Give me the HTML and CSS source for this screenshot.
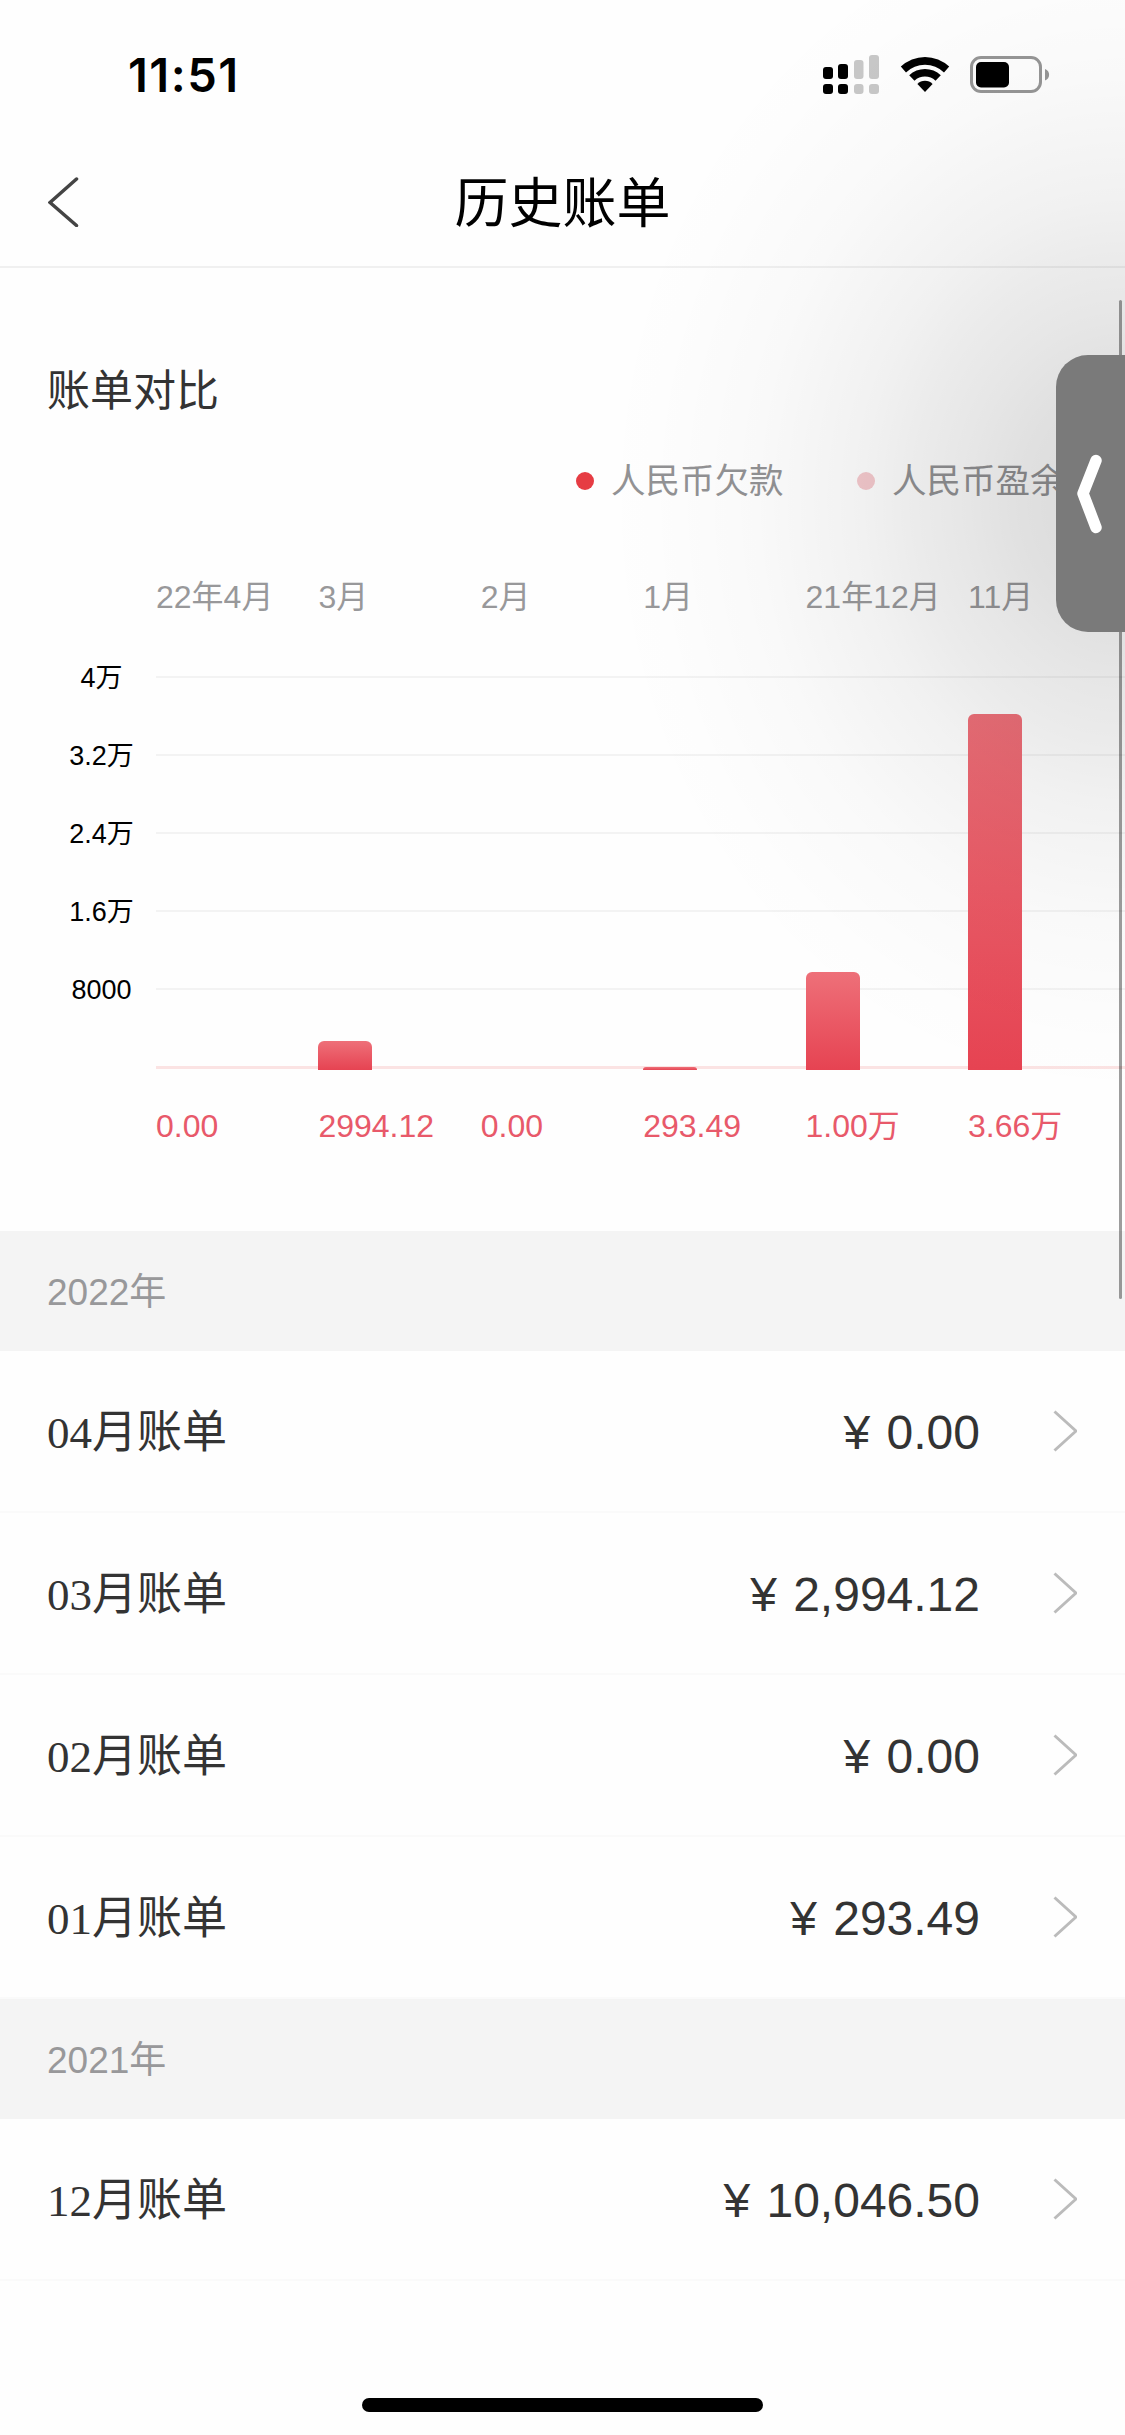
FILE: index.html
```html
<!DOCTYPE html>
<html lang="zh-CN">
<head>
  <meta charset="UTF-8" />
  <meta name="viewport" content="width=device-width, initial-scale=1.0"/>
  <title>历史账单</title>
  <link rel="stylesheet" href="styles.css">
</head>
<body>

<div class="status-bar">
  <span class="time">11:51</span>
  <div class="status-icons">
    <svg class="signal" width="56" height="40" viewBox="0 0 56 40">
      <rect x="0" y="12" width="10" height="12" rx="3"/>
      <rect x="15" y="9" width="10" height="15" rx="3"/>
      <rect class="off" x="31" y="5" width="9.500" height="19" rx="3"/>
      <rect class="off" x="46" y="0" width="10" height="24" rx="3"/>
      <rect x="0" y="29" width="10" height="10" rx="3"/>
      <rect x="15" y="29" width="10" height="10" rx="3"/>
      <rect class="off" x="31" y="29" width="9.500" height="10" rx="3"/>
      <rect class="off" x="46" y="29" width="10" height="10" rx="3"/>
    </svg>
    <svg class="wifi" width="50" height="38" viewBox="0 0 50 38">
      <path d="M.8 10.600a35 35 0 0 1 48.400 0l-5.200 5.800a27.500 27.500 0 0 0-38 0z"/>
      <path d="M9.200 19.200a23 23 0 0 1 31.600 0l-5.300 5.600a15.200 15.200 0 0 0-21 0z"/>
      <path d="M17.400 28a10.500 10.500 0 0 1 15.200 0L25 36z"/>
    </svg>
    <svg class="battery" width="80" height="38" viewBox="0 0 80 38">
      <rect class="case" x="1.500" y="1.500" width="69" height="34" rx="9.500"/>
      <rect x="6" y="6" width="33" height="25.500" rx="5"/>
      <path class="nub" d="M75 13c5.500 2 5.500 9.500 0 11.500z"/>
    </svg>
  </div>
</div>

<header class="nav">
  <svg class="back" width="32" height="50" viewBox="0 0 32 50">
    <path d="M28.500 2 2 25.500 28.500 48.500"/>
  </svg>
  <h1>历史账单</h1>
</header>

<section class="compare">
  <h2>账单对比</h2>

  <div class="legend">
    <span class="legend-item"><i class="dot"></i>人民币欠款</span>
    <span class="legend-item"><i class="dot dot-light"></i>人民币盈余</span>
  </div>

  <div class="chart">
    <div class="months">
      <span>22年4月</span>
      <span>3月</span>
      <span>2月</span>
      <span>1月</span>
      <span>21年12月</span>
      <span>11月</span>
    </div>

    <div class="axis">
      <span>4万</span>
      <span>3.2万</span>
      <span>2.4万</span>
      <span>1.6万</span>
      <span>8000</span>
    </div>

    <div class="lines">
      <i></i><i></i><i></i><i></i><i></i>
    </div>

    <div class="bars">
      <span class="bar" style="height: 0"></span>
      <span class="bar" style="height: 29px"></span>
      <span class="bar" style="height: 0"></span>
      <span class="bar" style="height: 3px"></span>
      <span class="bar" style="height: 98px"></span>
      <span class="bar" style="height: 356px"></span>
    </div>

    <div class="values">
      <span>0.00</span>
      <span>2994.12</span>
      <span>0.00</span>
      <span>293.49</span>
      <span>1.00万</span>
      <span>3.66万</span>
    </div>
  </div>
</section>

<h3 class="year">2022年</h3>
<ul class="bills">
  <li>
    <span class="month">04月账单</span>
    <span class="amount">¥ 0.00</span>
    <svg class="arrow" width="25" height="42" viewBox="0 0 25 42"><path d="M2.500 1.500 24 21 2.500 40.500"/></svg>
  </li>
  <li>
    <span class="month">03月账单</span>
    <span class="amount">¥ 2,994.12</span>
    <svg class="arrow" width="25" height="42" viewBox="0 0 25 42"><path d="M2.500 1.500 24 21 2.500 40.500"/></svg>
  </li>
  <li>
    <span class="month">02月账单</span>
    <span class="amount">¥ 0.00</span>
    <svg class="arrow" width="25" height="42" viewBox="0 0 25 42"><path d="M2.500 1.500 24 21 2.500 40.500"/></svg>
  </li>
  <li>
    <span class="month">01月账单</span>
    <span class="amount">¥ 293.49</span>
    <svg class="arrow" width="25" height="42" viewBox="0 0 25 42"><path d="M2.500 1.500 24 21 2.500 40.500"/></svg>
  </li>
</ul>

<h3 class="year">2021年</h3>
<ul class="bills">
  <li>
    <span class="month">12月账单</span>
    <span class="amount">¥ 10,046.50</span>
    <svg class="arrow" width="25" height="42" viewBox="0 0 25 42"><path d="M2.500 1.500 24 21 2.500 40.500"/></svg>
  </li>
</ul>

<div class="home-indicator"></div>

<!-- 阴影、滚动条和侧边按钮浮在页面上方 -->
<div class="shade"></div>
<div class="scrollbar"></div>
<div class="side-tab">
  <svg width="26" height="80" viewBox="0 0 26 80"><path d="M19 6.500 6 39.500 19 73.500"/></svg>
</div>

</body>
</html>
```
FILE: styles.css
```css
* {
  box-sizing: border-box;
}
body {
  position: relative;
  margin: 0;
  width: 1125px;
  height: 2435px;
  overflow: hidden;
  display: flex;
  flex-direction: column;
  background-color: #fefefe;
  font-family: "Liberation Sans", "Noto Sans CJK SC", sans-serif;
  color: #333;
}
h1, h2, h3, ul {
  margin: 0;
  padding: 0;
  font-weight: 400;
}
svg {
  display: block;
  flex: none;
}

/* status bar */
.status-bar {
  height: 134px;
  padding: 55px 76px 0 128px;
  display: flex;
  justify-content: space-between;
  align-items: flex-start;
  color: #000;
}
.time {
  font-family: Inter, sans-serif;
  font-weight: 600;
  font-size: 47px;
  line-height: 40px;
  letter-spacing: 1.500px;
}
.status-icons {
  display: flex;
  align-items: flex-start;
}
.signal .off {
  fill: #c8c8c8;
}
.wifi {
  margin: 1px 20px 0 21px;
}
.battery {
  margin-top: 1px;
  margin-right: -1px;
}
.battery .case {
  fill: none;
  stroke: #969696;
  stroke-width: 3;
}
.battery .nub {
  fill: #969696;
}

/* nav */
.nav {
  height: 134px;
  padding: 4px 48px 0;
  display: grid;
  grid-template-columns: 32px 1fr 32px;
  align-items: center;
  border-bottom: 2px solid #f0f0f0;
}
.back path {
  fill: none;
  stroke: #444;
  stroke-width: 3.500;
  stroke-linecap: round;
}
.nav h1 {
  padding-top: 3px;
  font-size: 54px;
  line-height: 60px;
  text-align: center;
  color: #000;
}

/* chart block */
.compare {
  height: 963px;
  padding-top: 93px;
}
.compare h2 {
  padding-left: 47px;
  font-size: 43px;
  line-height: 60px;
}
.legend {
  display: flex;
  gap: 73px;
  padding: 30px 0 0 576px;
  font-size: 34.500px;
  line-height: 60px;
  color: #929294;
}
.legend-item {
  width: 208px;
  display: flex;
  align-items: center;
  white-space: nowrap;
}
.dot {
  width: 18px;
  height: 18px;
  margin-right: 17px;
  border-radius: 50%;
  background-color: #e63c43;
}
.dot-light {
  background-color: #f4c9cd;
}
.chart {
  display: grid;
  grid-template-columns: 156px 969px;
  grid-template-rows: 50px 448px 50px;
  padding-top: 61px;
}
.months, .values {
  grid-column: 2;
  display: grid;
  grid-template-columns: repeat(6, 162.400px);
  font-size: 32px;
  line-height: 50px;
  white-space: nowrap;
}
.months {
  grid-row: 1;
  color: #98989a;
}
.values {
  grid-row: 3;
  margin-top: 31px;
  color: #e8596a;
}
.axis {
  grid-row: 2;
  grid-column: 1;
  padding-top: 17px;
  padding-left: 47px;
  font-size: 27px;
  line-height: 78px;
  text-align: center;
  color: #000;
}
.axis span {
  display: block;
}
.lines, .bars {
  grid-row: 2;
  grid-column: 2;
}
.lines {
  height: 393px;
  margin-top: 54px;
  border-bottom: 3px solid #fbe3e3;
}
.lines i {
  display: block;
  height: 78px;
  border-top: 2px solid #f3f3f3;
}
.bars {
  display: grid;
  grid-template-columns: repeat(6, 162.400px);
  align-items: end;
}
.bar {
  width: 54px;
  border-radius: 6px 6px 0 0;
  background: linear-gradient(#ee7079, #e64352);
}

/* bill list */
.year {
  height: 120px;
  padding: 2px 0 0 47px;
  background-color: #f4f4f4;
  font-size: 37px;
  line-height: 120px;
  color: #98989a;
}
.bills {
  list-style: none;
}
.bills li {
  height: 162px;
  padding: 0 48px 0 47px;
  display: flex;
  align-items: center;
  border-bottom: 2px solid #fafafa;
}
.month {
  flex: 1;
  padding-top: 4px;
  font-family: "Liberation Serif", "Noto Sans CJK SC", serif;
  font-size: 45px;
  line-height: 60px;
}
.amount {
  padding-top: 3px;
  font-size: 48px;
  line-height: 60px;
  word-spacing: 3px;
}
.arrow {
  margin-left: 72px;
}
.arrow path {
  fill: none;
  stroke: #bbb;
  stroke-width: 3;
}
.home-indicator {
  width: 401px;
  height: 14px;
  margin: auto auto 23px;
  border-radius: 7px;
  background-color: #000;
}

/* overlays */
.shade {
  position: absolute;
  inset: 0;
  background: radial-gradient(530px 610px at 1125px 500px,
    rgba(0,0,0,.14), rgba(0,0,0,.134) 10%, rgba(0,0,0,.118) 20%,
    rgba(0,0,0,.096) 30%, rgba(0,0,0,.073) 40%, rgba(0,0,0,.052) 50%,
    rgba(0,0,0,.034) 60%, rgba(0,0,0,.021) 70%, rgba(0,0,0,.011) 80%,
    rgba(0,0,0,.005) 90%, rgba(0,0,0,0));
}
.scrollbar {
  position: absolute;
  top: 300px;
  right: 3px;
  width: 3px;
  height: 999px;
  border-radius: 2px;
  background-color: rgba(0,0,0,.38);
}
.side-tab {
  position: absolute;
  top: 355px;
  right: 0;
  width: 69px;
  height: 277px;
  padding: 99px 0 0 21px;
  border-radius: 32px 0 0 32px;
  background-color: #7a7a7a;
}
.side-tab path {
  fill: none;
  stroke: #fff;
  stroke-width: 11.500;
  stroke-linecap: round;
  stroke-linejoin: round;
}
```
